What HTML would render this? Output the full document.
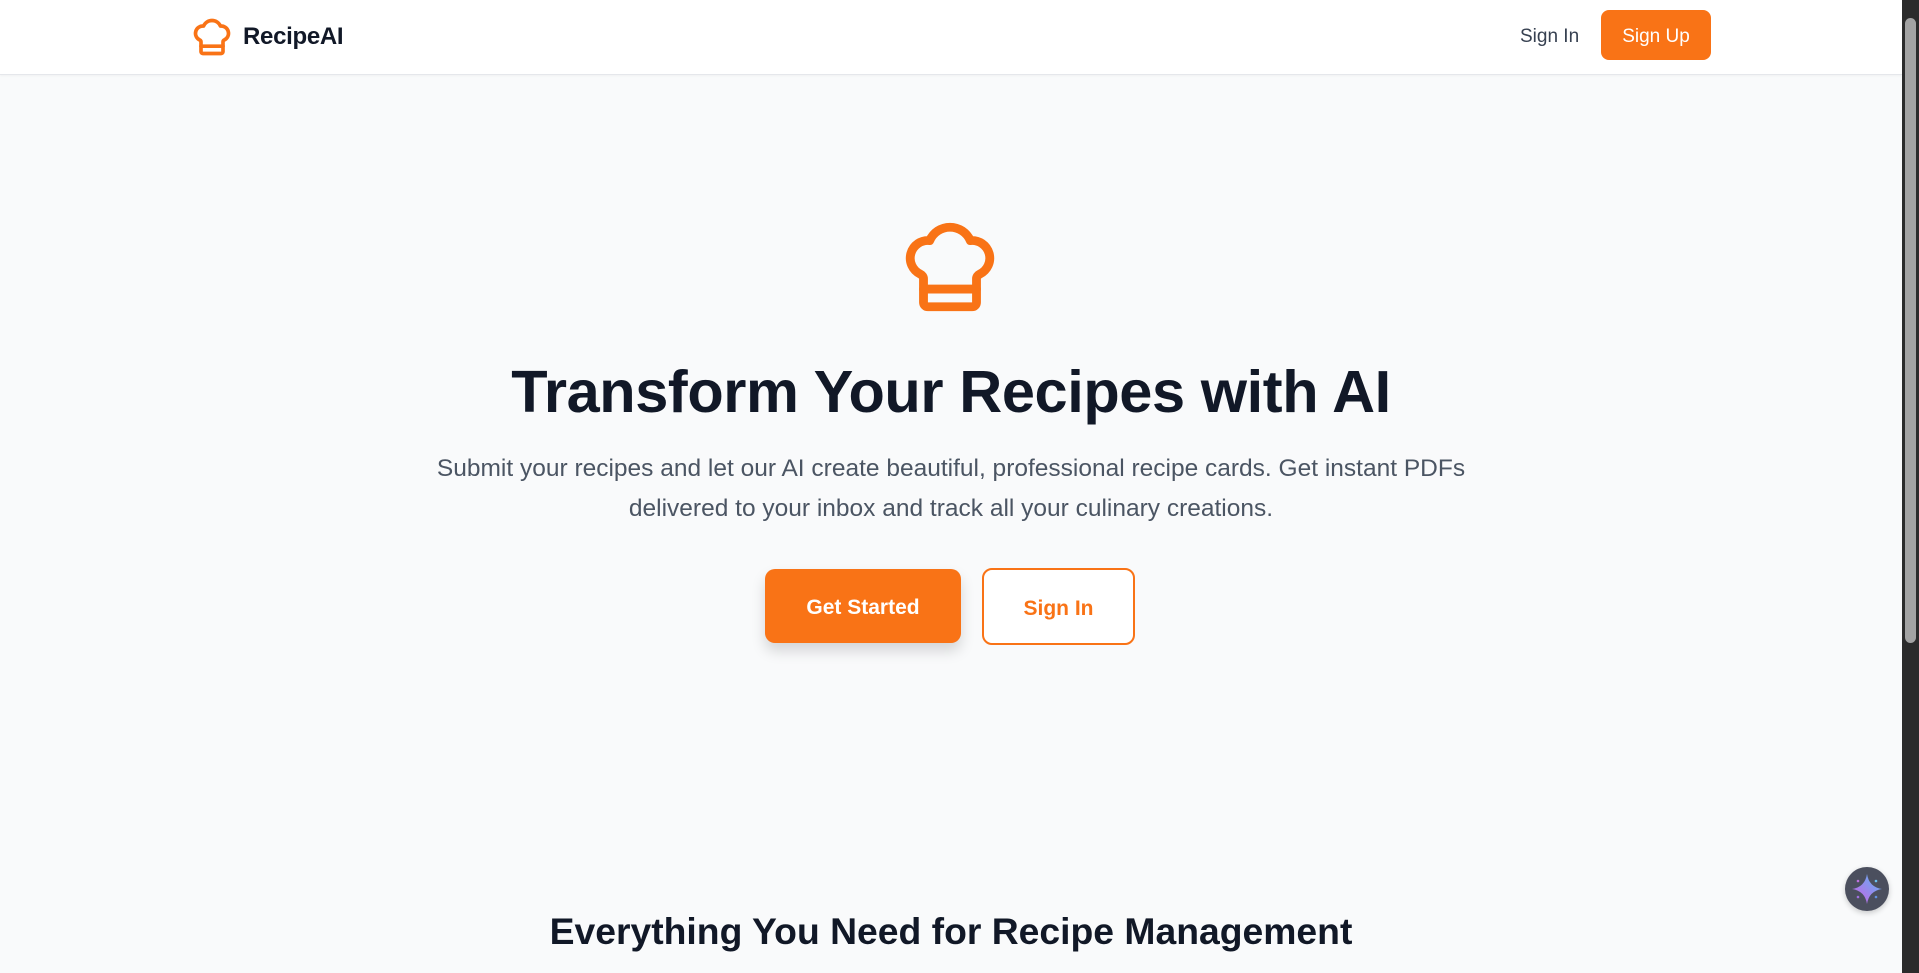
<!DOCTYPE html>
<html><head><meta charset="utf-8"><style>
*{box-sizing:border-box;margin:0;padding:0}
body{width:1919px;height:973px;overflow:hidden;background:#f9fafb;font-family:"Liberation Sans",sans-serif;position:relative}
.hdr{position:absolute;left:0;top:0;width:1902px;height:75px;background:#fff;border-bottom:1px solid #e5e7eb;box-shadow:0 1px 2px rgba(0,0,0,.04)}
.logo{position:absolute;left:190px;top:15px;display:flex;align-items:center}
.logo span{font-weight:700;font-size:24px;color:#111827;margin-left:9px;letter-spacing:-.3px}
.si{position:absolute;left:1520px;top:26px;font-size:19px;color:#374151}
.su{position:absolute;left:1601px;top:10px;width:110px;height:50px;background:#f97316;border-radius:8px;color:#fff;font-size:19px;text-align:center;line-height:54px}
h1{position:absolute;left:0;width:1902px;top:357px;text-align:center;font-size:59.5px;font-weight:700;color:#111827;letter-spacing:-.4px}
p.sub{position:absolute;left:0;width:1902px;top:449px;text-align:center;font-size:24.5px;line-height:40px;color:#4b5563}
.b1{position:absolute;left:765px;top:569px;width:196px;height:74px;background:#f97316;border-radius:10px;color:#fff;font-weight:700;font-size:21px;text-align:center;line-height:78px;box-shadow:0 8px 14px rgba(0,0,0,.15)}
.b2{position:absolute;left:982px;top:568px;width:153px;height:77px;border:2px solid #f97316;border-radius:10px;color:#f97316;font-size:21px;font-weight:700;text-align:center;line-height:77px;background:#fff}
h2{position:absolute;left:0;width:1902px;top:910px;text-align:center;font-size:37.3px;font-weight:700;color:#111827}
.sb{position:absolute;left:1902px;top:0;width:17px;height:973px;background:#2b2b2b}
.th{position:absolute;left:3px;top:18px;width:11px;height:625px;background:#a3a3a3;border-radius:6px}
.fab{position:absolute;left:1845px;top:867px;width:44px;height:44px;border-radius:50%;background:#4b4f5e;box-shadow:0 2px 6px rgba(0,0,0,.2)}
</style></head><body>
<div class="hdr">
<div class="logo"><svg width="44" height="44" viewBox="0 0 24 24" fill="none" stroke="#f97316" stroke-width="2" stroke-linecap="round" stroke-linejoin="round"><path d="M17 21a1 1 0 0 0 1-1v-5.35c0-.457.316-.844.727-1.041a4 4 0 0 0-2.134-7.589 5 5 0 0 0-9.186 0 4 4 0 0 0-2.134 7.588c.411.198.727.585.727 1.041V20a1 1 0 0 0 1 1Z"/><path d="M6 17h12"/></svg><span>RecipeAI</span></div>
<div class="si">Sign In</div>
<div class="su">Sign Up</div>
</div>
<svg style="position:absolute;left:897px;top:214px" width="106" height="106" viewBox="0 0 24 24" fill="none" stroke="#f97316" stroke-width="2" stroke-linecap="round" stroke-linejoin="round"><path d="M17 21a1 1 0 0 0 1-1v-5.35c0-.457.316-.844.727-1.041a4 4 0 0 0-2.134-7.589 5 5 0 0 0-9.186 0 4 4 0 0 0-2.134 7.588c.411.198.727.585.727 1.041V20a1 1 0 0 0 1 1Z"/><path d="M6 17h12"/></svg>
<h1>Transform Your Recipes with AI</h1>
<p class="sub">Submit your recipes and let our AI create beautiful, professional recipe cards. Get instant PDFs<br>delivered to your inbox and track all your culinary creations.</p>
<div class="b1">Get Started</div>
<div class="b2">Sign In</div>
<h2>Everything You Need for Recipe Management</h2>
<div class="fab"><svg width="44" height="44" viewBox="0 0 44 44"><defs><linearGradient id="g" x1="0" y1="1" x2="1" y2="0"><stop offset="0" stop-color="#d05ce3"/><stop offset="1" stop-color="#5ab8f5"/></linearGradient></defs><path d="M22 7 Q24 20 37 22 Q24 24 22 37 Q20 24 7 22 Q20 20 22 7Z" fill="url(#g)"/><circle cx="13" cy="14" r="1.3" fill="#c070e0"/><circle cx="31" cy="14" r="1.3" fill="#6ac0f0"/><circle cx="13" cy="30" r="1.3" fill="#a070e0"/><circle cx="31" cy="30" r="1.3" fill="#6090e0"/></svg></div>
<div class="sb"><div class="th"></div></div>
</body></html>
